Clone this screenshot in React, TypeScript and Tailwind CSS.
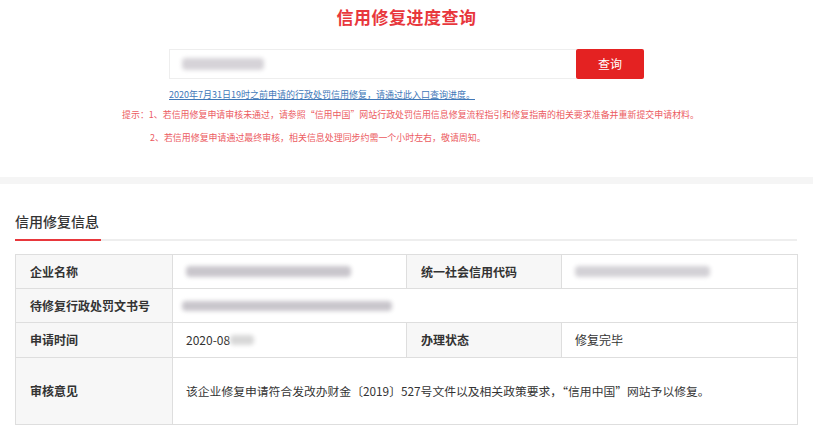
import React from 'react';

const font = { fontFamily: '"Noto Sans CJK SC", "Liberation Sans", sans-serif' };

function Blur({ className }: { className: string }) {
  return <span className={`inline-block align-middle rounded-sm bg-[#c9c6cc] blur-[2px] ${className}`} />;
}

function Label({ children }: { children: React.ReactNode }) {
  return (
    <div className="flex items-center bg-[#f7f7f7] px-[14px] text-[12px] font-bold text-[#333]">
      {children}
    </div>
  );
}

function Value({ children, span }: { children: React.ReactNode; span?: boolean }) {
  return (
    <div className={`flex items-center bg-white px-[13px] text-[12px] text-[#333] ${span ? 'col-span-3' : ''}`}>
      {children}
    </div>
  );
}

export default function App() {
  return (
    <div className="w-[813px] h-[429px] overflow-hidden bg-white" style={font}>
      {/* search area */}
      <div className="flex flex-col items-center pt-[5px] h-[177px]">
        <h1 className="text-[17px] leading-[24px] font-bold text-[#e8373c] tracking-[0.5px]">信用修复进度查询</h1>
        <div className="mt-[20px] flex w-[475px] h-[30px]">
          <div className="flex-1 flex items-center border border-[#eee] border-r-0 px-[12px]">
            <Blur className="w-[82px] h-[12px] bg-[#d6d3d8]" />
          </div>
          <button className="w-[68px] h-[30px] rounded-[2px] bg-[#e42222] text-white text-[12px]">查询</button>
        </div>
        <div className="w-[475px] mt-[10px] text-[9px] leading-[12px]">
          <a className="text-[#3f78b8] underline">2020年7月31日19时之前申请的行政处罚信用修复，请通过此入口查询进度。</a>
        </div>
        <div className="self-start ml-[122px] mt-[8px] text-[8.95px] leading-[12px] text-[#ec5b5f] whitespace-nowrap">
          <p>提示：1、若信用修复申请审核未通过，请参照“信用中国”网站行政处罚信用信息修复流程指引和修复指南的相关要求准备并重新提交申请材料。</p>
          <p className="mt-[11px] pl-[28px]">2、若信用修复申请通过最终审核，相关信息处理同步约需一个小时左右，敬请周知。</p>
        </div>
      </div>
      <div className="h-[7px] bg-[#f5f5f5]" />

      {/* info */}
      <div className="px-[15px] pt-[27px]">
        <div className="relative border-b-2 border-[#eeeeee] w-[782px]">
          <h2 className="text-[14px] leading-[20px] font-medium text-[#333] pb-[8px]">信用修复信息</h2>
          <div className="absolute left-0 bottom-[-2px] w-[86px] h-[2px] bg-[#e8373c]" />
        </div>
        <div className="mt-[13px] grid grid-cols-[156px_233px_154px_235px] grid-rows-[33px_33px_34px_66px] gap-px bg-[#dedede] border border-[#dedede] w-[783px]">
          <Label>企业名称</Label>
          <Value><Blur className="w-[165px] h-[11px]" /></Value>
          <Label>统一社会信用代码</Label>
          <Value><Blur className="w-[135px] h-[11px] bg-[#d3d1d6]" /></Value>

          <Label>待修复行政处罚文书号</Label>
          <Value span><Blur className="ml-[-4px] w-[210px] h-[10px]" /></Value>

          <Label>申请时间</Label>
          <Value>
            <span>2020-08</span>
            <Blur className="w-[24px] h-[10px] bg-[#d8d8d8]" />
          </Value>
          <Label>办理状态</Label>
          <Value>修复完毕</Value>

          <Label>审核意见</Label>
          <Value span>
            <span className="text-[11.8px]">该企业修复申请符合发改办财金〔2019〕527号文件以及相关政策要求，“信用中国”网站予以修复。</span>
          </Value>
        </div>
      </div>
    </div>
  );
}
